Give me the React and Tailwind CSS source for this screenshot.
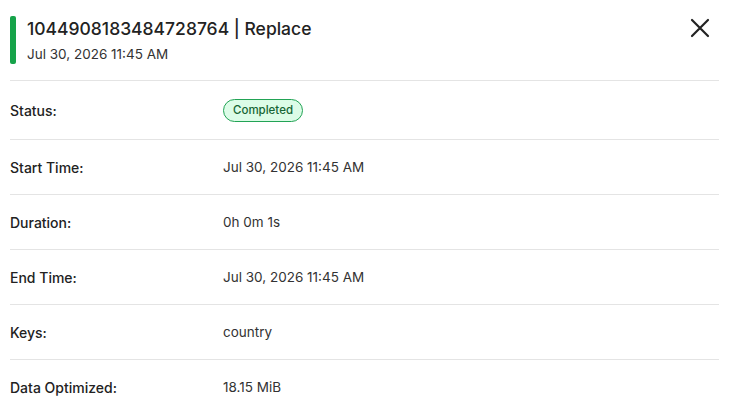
import React from 'react';

const rows = [
    { label: 'Status:', badge: 'Completed' },
    { label: 'Start Time:', value: 'Jul 30, 2026 11:45 AM' },
    { label: 'Duration:', value: '0h 0m 1s' },
    { label: 'End Time:', value: 'Jul 30, 2026 11:45 AM' },
    { label: 'Keys:', value: 'country' },
    { label: 'Data Optimized:', value: '18.15 MiB' },
];

const App = () => {
    return (
        <div className="w-[729px] h-[412px] overflow-hidden bg-white px-[10px] text-[#222] font-['Inter',sans-serif]">
            <div className="flex items-start justify-between pt-[16px] pb-[16px] border-b border-[#e4e4e4]">
                <div className="flex gap-[11px]">
                    <div className="w-[6px] h-[48px] rounded-[2px] bg-[#16a34a]"></div>
                    <div className="pt-[1px]">
                        <p className="text-[17.5px] leading-[24px] font-medium">1044908183484728764 | Replace</p>
                        <p className="text-[13.5px] leading-[20px] mt-[3px] text-[#333]">Jul 30, 2026 11:45 AM</p>
                    </div>
                </div>
                <button className="mr-[7px] text-[#222]">
                    <svg width="24" height="24" viewBox="0 0 24 24" fill="none" stroke="currentColor" strokeWidth="2.2" strokeLinecap="round">
                        <path d="M4 4l16 16M20 4L4 20" />
                    </svg>
                </button>
            </div>
            {rows.map((row, i) => (
                <div key={row.label} className={'flex items-center ' + (i === 0 ? 'h-[59px] ' : 'h-[55px] ') + (i < rows.length - 1 ? 'border-b border-[#e4e4e4]' : '')}>
                    <div className="w-[213px] text-[14px] font-medium">{row.label}</div>
                    {row.badge ? (
                        <span className="px-[9px] h-[23px] leading-[21px] rounded-full border border-[#22a355] bg-[#dcfce7] text-[#166534] text-[11.5px] font-medium">{row.badge}</span>
                    ) : (
                        <div className="text-[13.5px] text-[#333]">{row.value}</div>
                    )}
                </div>
            ))}
        </div>
    );
};

export default App;
